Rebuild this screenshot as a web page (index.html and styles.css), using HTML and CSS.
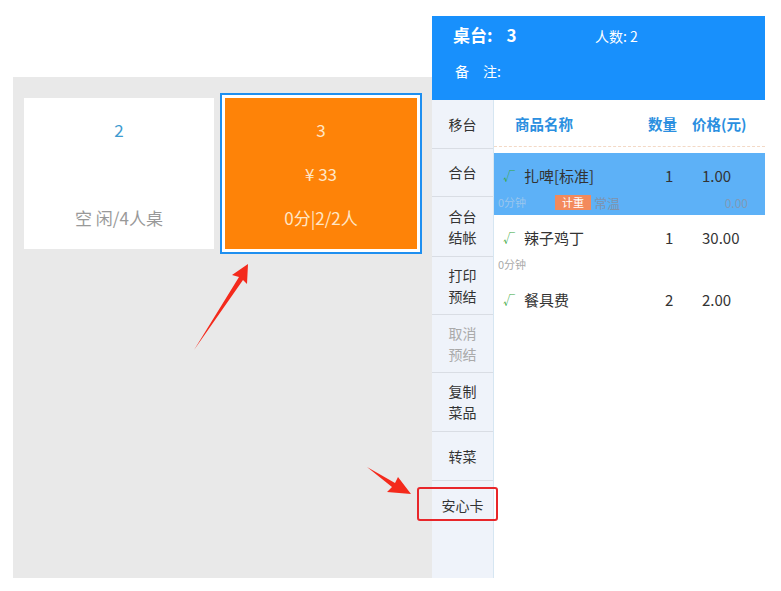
FILE: index.html
```html
<!DOCTYPE html>
<html>
<head>
<meta charset="utf-8">
<link rel="stylesheet" href="styles.css">
</head>
<body>
<div class="page">
  <div class="floor">
    <div class="cards">
      <div class="card idle">
        <div class="line num">2</div>
        <div class="line"></div>
        <div class="line status">空 闲/4人桌</div>
      </div>
      <div class="card busy">
        <div class="line">3</div>
        <div class="line">¥ 33</div>
        <div class="line">0分|2/2人</div>
      </div>
    </div>
  </div>
  <div class="panel">
    <div class="head">
      <div class="head-row">
        <span class="table-no"><b>桌台:</b><b class="tn">3</b></span>
        <span class="people">人数: 2</span>
      </div>
      <div class="note"><span class="n1">备</span>注:</div>
    </div>
    <div class="body">
      <div class="side">
        <div class="btn h49">移台</div>
        <div class="btn h48">合台</div>
        <div class="btn h60">合台<br>结帐</div>
        <div class="btn h58">打印<br>预结</div>
        <div class="btn h58 dis">取消<br>预结</div>
        <div class="btn h59">复制<br>菜品</div>
        <div class="btn h49">转菜</div>
        <div class="btn h48 mark">安心卡</div>
      </div>
      <div class="list">
        <div class="thead">
          <span class="c-name">商品名称</span>
          <span class="c-qty">数量</span>
          <span class="c-price">价格(元)</span>
        </div>
        <div class="item sel">
          <div class="main"><span class="chk">√</span><span class="nm">扎啤[标准]</span><span class="qty">1</span><span class="pr">1.00</span></div>
          <div class="sub"><span class="tm">0分钟</span><span class="badge">计重</span><span class="tag">常温</span><span class="sp">0.00</span></div>
        </div>
        <div class="item">
          <div class="main"><span class="chk">√</span><span class="nm">辣子鸡丁</span><span class="qty">1</span><span class="pr">30.00</span></div>
          <div class="sub"><span class="tm">0分钟</span></div>
        </div>
        <div class="item">
          <div class="main"><span class="chk">√</span><span class="nm">餐具费</span><span class="qty">2</span><span class="pr">2.00</span></div>
        </div>
      </div>
    </div>
  </div>
</div>
<svg class="arrows" width="781" height="591" viewBox="0 0 781 591">
  <polygon points="248,264 232,275 239,277 194,350 243,280 247,284" fill="#f42a1c"/>
  <polygon points="367,467 395,483 398,477 411,494 387,492 392,487" fill="#f42a1c"/>
</svg>
</body>
</html>
```

FILE: styles.css
```css
html, body {
  margin: 0;
  padding: 0;
  background: #fff;
  font-family: "Noto Sans CJK SC", "Microsoft YaHei", sans-serif;
  color: #333;
}
.page {
  display: flex;
  align-items: flex-start;
  padding: 16px 0 0 13px;
  width: 781px;
  height: 591px;
  box-sizing: border-box;
}
.floor {
  margin-top: 61px;
  width: 419px;
  height: 501px;
  background: #e9e9e9;
  box-sizing: border-box;
  padding: 21px 0 0 11px;
}
.cards {
  display: flex;
  gap: 11px;
}
.card {
  width: 190px;
  height: 151px;
  box-sizing: border-box;
  padding-top: 10px;
  display: flex;
  flex-direction: column;
  font-size: 17px;
}
.card .line {
  height: 44px;
  line-height: 44px;
  text-align: center;
}
.idle { background: #fff; }
.idle .num { color: #3e9bd0; }
.idle .status { color: #999; }
.busy {
  width: 192px;
  background: #fe8308;
  color: #ffe6c6;
  box-shadow: 0 0 0 3px #fff, 0 0 0 5px #1e8ff0;
}
.panel {
  width: 333px;
  height: 562px;
  display: flex;
  flex-direction: column;
}
.head {
  height: 84px;
  background: #1890fc;
  color: #fff;
  box-sizing: border-box;
  padding: 6px 0 0 21px;
}
.head-row {
  display: flex;
  align-items: baseline;
  height: 26px;
}
.table-no {
  font-size: 17px;
  width: 142px;
}
.table-no .tn { margin-left: 14px; }
.people { font-size: 14px; }
.note {
  margin-top: 13px;
  font-size: 14px;
  padding-left: 2px;
}
.note .n1 { margin-right: 14px; }
.body {
  display: flex;
  flex: 1;
}
.side {
  width: 61px;
  height: 478px;
  background: #eff3fa;
  border-right: 1px solid #d6e6f2;
  display: flex;
  flex-direction: column;
}
.btn {
  box-sizing: border-box;
  border-bottom: 1px solid #d9dde4;
  font-size: 14px;
  line-height: 21px;
  display: flex;
  align-items: center;
  justify-content: center;
  text-align: center;
  color: #333;
  position: relative;
}
.h48 { height: 48px; }
.h49 { height: 49px; }
.h58 { height: 58px; }
.h59 { height: 59px; }
.h60 { height: 60px; }
.dis { color: #aaa; }
.mark { border-bottom: none; }
.mark::after {
  content: "";
  position: absolute;
  left: -15px;
  top: 6px;
  width: 81px;
  height: 34px;
  box-sizing: border-box;
  border: 2px solid #e8262a;
  border-radius: 3px;
}
.list {
  flex: 1;
  background: #fff;
}
.thead {
  height: 47px;
  box-sizing: border-box;
  border-bottom: 1px dashed #f3d9c6;
  display: flex;
  align-items: center;
  font-size: 14.5px;
  font-weight: bold;
  color: #2b8fe0;
  margin-bottom: 6px;
}
.thead .c-name { margin-left: 21px; width: 133px; }
.thead .c-qty { width: 44px; }
.item {
  padding-top: 8px;
}
.item.sel { background: #5db1f7; }
.main {
  height: 28px;
  display: flex;
  align-items: center;
  font-size: 15px;
  color: #333;
}
.chk {
  color: #38a83e;
  font-size: 12px;
  margin-left: 9px;
  width: 21px;
}
.nm { width: 141px; }
.qty { width: 37px; }
.sub {
  height: 26px;
  display: flex;
  align-items: center;
  font-size: 11px;
  color: #aaa;
}
.sel .sub { color: #9ac6ee; }
.tm { margin-left: 4px; width: 57px; }
.badge {
  background: #f38a5c;
  color: #fff;
  padding: 0 7px;
  height: 15px;
  line-height: 15px;
  font-size: 11px;
  margin-right: 3px;
}
.tag { color: #7f93ad; font-size: 13px; }
.sp {
  margin-left: auto;
  margin-right: 17px;
  color: #7f9ab8;
  font-size: 12px;
}
.arrows {
  position: absolute;
  left: 0;
  top: 0;
  pointer-events: none;
}
```
